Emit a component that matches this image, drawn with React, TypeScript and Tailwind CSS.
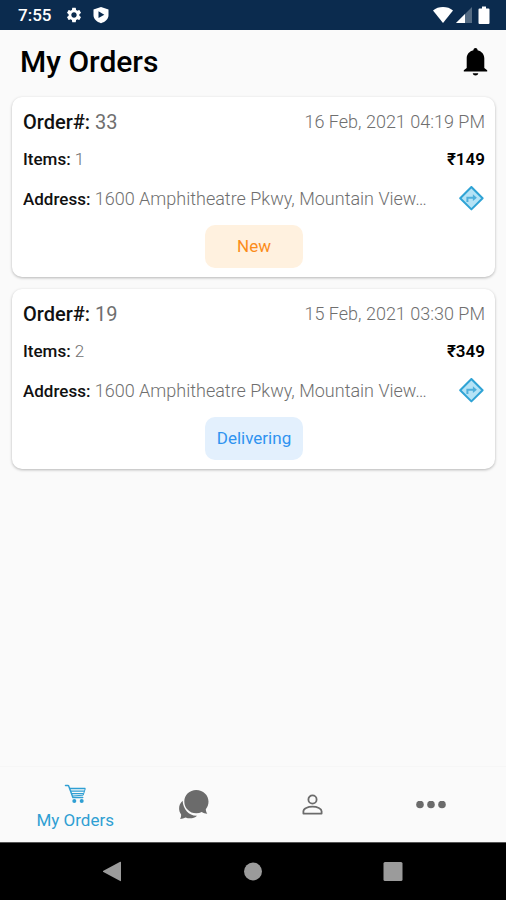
import React from 'react'
import { MdSettings } from 'react-icons/md'

interface Order {
  id: number
  date: string
  items: number
  total: string
  address: string
  status: 'New' | 'Delivering'
}

const orders: Order[] = [
  {
    id: 33,
    date: '16 Feb, 2021 04:19 PM',
    items: 1,
    total: '₹149',
    address: '1600 Amphitheatre Pkwy, Mountain View…',
    status: 'New',
  },
  {
    id: 19,
    date: '15 Feb, 2021 03:30 PM',
    items: 2,
    total: '₹349',
    address: '1600 Amphitheatre Pkwy, Mountain View…',
    status: 'Delivering',
  },
]

const statusStyles = {
  New: 'bg-[#fff1df] text-[#fb8c1a]',
  Delivering: 'bg-[#e3f0fd] text-[#2f93f0]',
}

export default function App() {
  return (
    <div className="min-h-screen flex flex-col bg-[#fafafa] font-['Roboto',sans-serif] text-black">
      <StatusBar />

      <header className="h-[67px] flex items-center justify-between pb-1 pl-5 pr-[17px]">
        <h1 className="text-[30px] leading-9 font-medium">My Orders</h1>
        <button type="button" aria-label="Notifications">
          <BellIcon />
        </button>
      </header>

      <main className="flex-1 flex flex-col gap-3 pl-3 pr-[11px]">
        {orders.map((order) => (
          <OrderCard key={order.id} order={order} />
        ))}
      </main>

      <BottomNav />
      <SystemNav />
    </div>
  )
}

const StatusBar: React.FC = () => (
  <div className="h-[30px] flex items-center justify-between pl-[18px] pr-[13px] bg-[#0b2b4e] text-white">
    <div className="flex items-center gap-3">
      <span className="text-[17px] leading-6 font-medium">7:55</span>
      <div className="flex items-center gap-[9px] pl-0.5">
        <MdSettings className="w-[18px] h-[18px]" />
        <svg viewBox="0 0 18 18" className="w-[18px] h-[18px]">
          <path d="M9 1 16.5 3.6V9c0 4-3 6.800-7.500 8.200C4.500 15.800 1.500 13 1.500 9V3.600Z" fill="#fff" />
          <path d="M6.500 5.300v6.800L12.300 8.700Z" fill="#0b2b4e" />
        </svg>
      </div>
    </div>
    <div className="flex items-center gap-[3px]">
      <svg viewBox="0 0 20 16" className="w-5 h-4">
        <path d="M0 3.400C2.800 1.200 6.200 0 10 0s7.200 1.200 10 3.400L10 16Z" fill="#fff" />
      </svg>
      <svg viewBox="0 0 16 16" className="w-4 h-4">
        <path d="M16 0v16H0Z" fill="#fff" fillOpacity="0.3" />
        <path d="M9 7v9H0Z" fill="#fff" />
      </svg>
      <svg viewBox="0 0 18 18" className="w-[18px] h-[18px]">
        <path d="M7 0.500h4v2h2.500q1 0 1 1v13.500q0 1-1 1h-9q-1 0-1-1V3.500q0-1 1-1H7Z" fill="#fff" />
      </svg>
    </div>
  </div>
)

const OrderCard: React.FC<{ order: Order }> = ({ order }) => (
  <article className="flex flex-col gap-3 pt-3 pb-[9px] pl-[11px] pr-[10px] rounded-[10px] bg-white shadow-[0_1px_3px_rgba(0,0,0,0.28)] text-[17px] text-[#6f6f6f]">
    <div className="h-[26px] flex items-center justify-between">
      <h2 className="text-[20px]">
        <span className="font-medium text-[#111111]">Order#:</span> {order.id}
      </h2>
      <time className="text-lg font-light">{order.date}</time>
    </div>
    <div className="h-[26px] flex items-center justify-between">
      <p className="font-light">
        <span className="font-medium text-[#111111]">Items:</span> {order.items}
      </p>
      <p className="font-semibold text-black">{order.total}</p>
    </div>
    <div className="h-7 flex items-center justify-between gap-2">
      <p className="min-w-0 truncate text-lg font-light">
        <span className="text-[17px] font-medium text-[#111111]">Address:</span> {order.address}
      </p>
      <button type="button" aria-label="Directions" className="shrink-0">
        <DirectionsIcon />
      </button>
    </div>
    <button type="button" className={`self-center w-[98px] h-[43px] rounded-[10px] ${statusStyles[order.status]}`}>
      {order.status}
    </button>
  </article>
)

const BottomNav: React.FC = () => (
  <nav className="h-[76px] grid grid-cols-4 px-4 border-t border-[#f6f6f6] text-[#6b6b6b]">
    <a href="#orders" className="flex flex-col items-center justify-center gap-1 pt-[6px] text-[17px] leading-6 text-[#2f9fd3]">
      <CartIcon />
      My Orders
    </a>
    <a href="#chat" aria-label="Chat" className="flex items-center justify-center">
      <ChatIcon />
    </a>
    <a href="#profile" aria-label="Profile" className="flex items-center justify-center">
      <svg viewBox="0 0 22 22" className="w-[22px] h-[22px]" fill="none" stroke="currentColor" strokeWidth="1.8">
        <circle cx="11.500" cy="5.500" r="4.100" />
        <path d="M2.400 19.600v-2.300c0-2.700 4.300-4.600 9.100-4.600s9.100 1.900 9.100 4.600v2.300Z" strokeLinejoin="round" />
      </svg>
    </a>
    <a href="#more" aria-label="More" className="flex items-center justify-center">
      <svg viewBox="0 0 30 8" className="w-[30px] h-2" fill="currentColor">
        <circle cx="4" cy="3.500" r="3.800" />
        <circle cx="15" cy="3.500" r="3.800" />
        <circle cx="26" cy="3.500" r="3.800" />
      </svg>
    </a>
  </nav>
)

const SystemNav: React.FC = () => (
  <div className="h-[58px] flex items-center justify-center gap-[120px] border-t border-[#555555] bg-black text-[#9b9b9b]">
    <button type="button" aria-label="Back">
      <svg viewBox="0 0 20 22" className="w-5 h-[22px]" fill="currentColor">
        <path d="M17.200.700.400 9.700q-1 .7 0 1.400l16.800 9q.8.200.8-.6V1.300q0-.8-.8-.6Z" />
      </svg>
    </button>
    <button type="button" aria-label="Home">
      <svg viewBox="0 0 20 20" className="w-5 h-5" fill="currentColor">
        <circle cx="10" cy="9.500" r="9" />
      </svg>
    </button>
    <button type="button" aria-label="Recent apps">
      <svg viewBox="0 0 20 20" className="w-5 h-5" fill="currentColor">
        <rect x="0.500" y="0" width="19" height="19" rx="1.500" />
      </svg>
    </button>
  </div>
)

const BellIcon = () => (
  <svg viewBox="0 0 26 28" className="w-[26px] h-7" fill="currentColor">
    <path d="M12.500 0c1.200 0 2 .9 2.100 2.200 3.900.9 6.700 4.100 6.700 8v9.800l2.900 2.300v1.300H.800v-1.300l2.900-2.300v-9.800c0-3.900 2.800-7.100 6.700-8C10.500.9 11.300 0 12.500 0Z" />
    <path d="M9.700 25.300h5.600c-.3 1.500-1.400 2.200-2.800 2.200s-2.500-.7-2.800-2.200Z" />
  </svg>
)

const DirectionsIcon = () => (
  <svg viewBox="0 0 26 26" className="w-[26px] h-[26px]" fill="none">
    <path d="M12.400 1 23.600 12.200 12.400 23.400 1.200 12.200Z" fill="#b5e3f6" stroke="#2fa3d5" strokeWidth="2" strokeLinejoin="round" />
    <path d="M8.400 16v-4.300h7" stroke="#4fb0dc" strokeWidth="2" />
    <path d="M13.900 8.300 17.900 11.700l-4 3.400Z" fill="#4fb0dc" />
  </svg>
)

const CartIcon = () => (
  <svg viewBox="0 0 22 20" className="w-[22px] h-5" fill="none" stroke="currentColor">
    <path d="M1.500 1.500h2.300q.8 0 1 .8L8.900 13.500h9.800" strokeWidth="1.500" strokeLinecap="round" />
    <path d="M6 4.500h15.300M7 7.200h13.300M7.800 9.700h11.800" strokeWidth="1.300" />
    <path d="M21.300 4.500 19.200 11.200 8.500 12" strokeWidth="1" />
    <circle cx="10.300" cy="17" r="2" fill="currentColor" stroke="none" />
    <circle cx="17.700" cy="17" r="2" fill="currentColor" stroke="none" />
  </svg>
)

const ChatIcon = () => (
  <svg viewBox="0 0 30 30" className="w-[30px] h-[30px]" fill="currentColor">
    <path d="M3.600 10.800C1.300 13 .1 15.500.1 18.500c0 2.200.7 4.200 2 5.900.1 1.700-.3 3.100-1 4.600 2.100-.1 3.800-.7 5.400-1.500 4.300 1.600 8.500.9 11.600-1.800C10.300 26.200 4.300 20 3.600 10.800Z" />
    <path d="M17.200 0c7 0 12.300 5.200 12.300 11.500 0 3.300-1 5.700-2.700 7.700.1 1.800.6 3.100 1.500 4.600-2.200 0-3.900-.6-5.500-1.700-1.700.8-3.600 1.200-5.600 1.200-6.600 0-11.900-5.200-11.900-11.800C5.300 5 10.600 0 17.200 0Z" />
  </svg>
)
